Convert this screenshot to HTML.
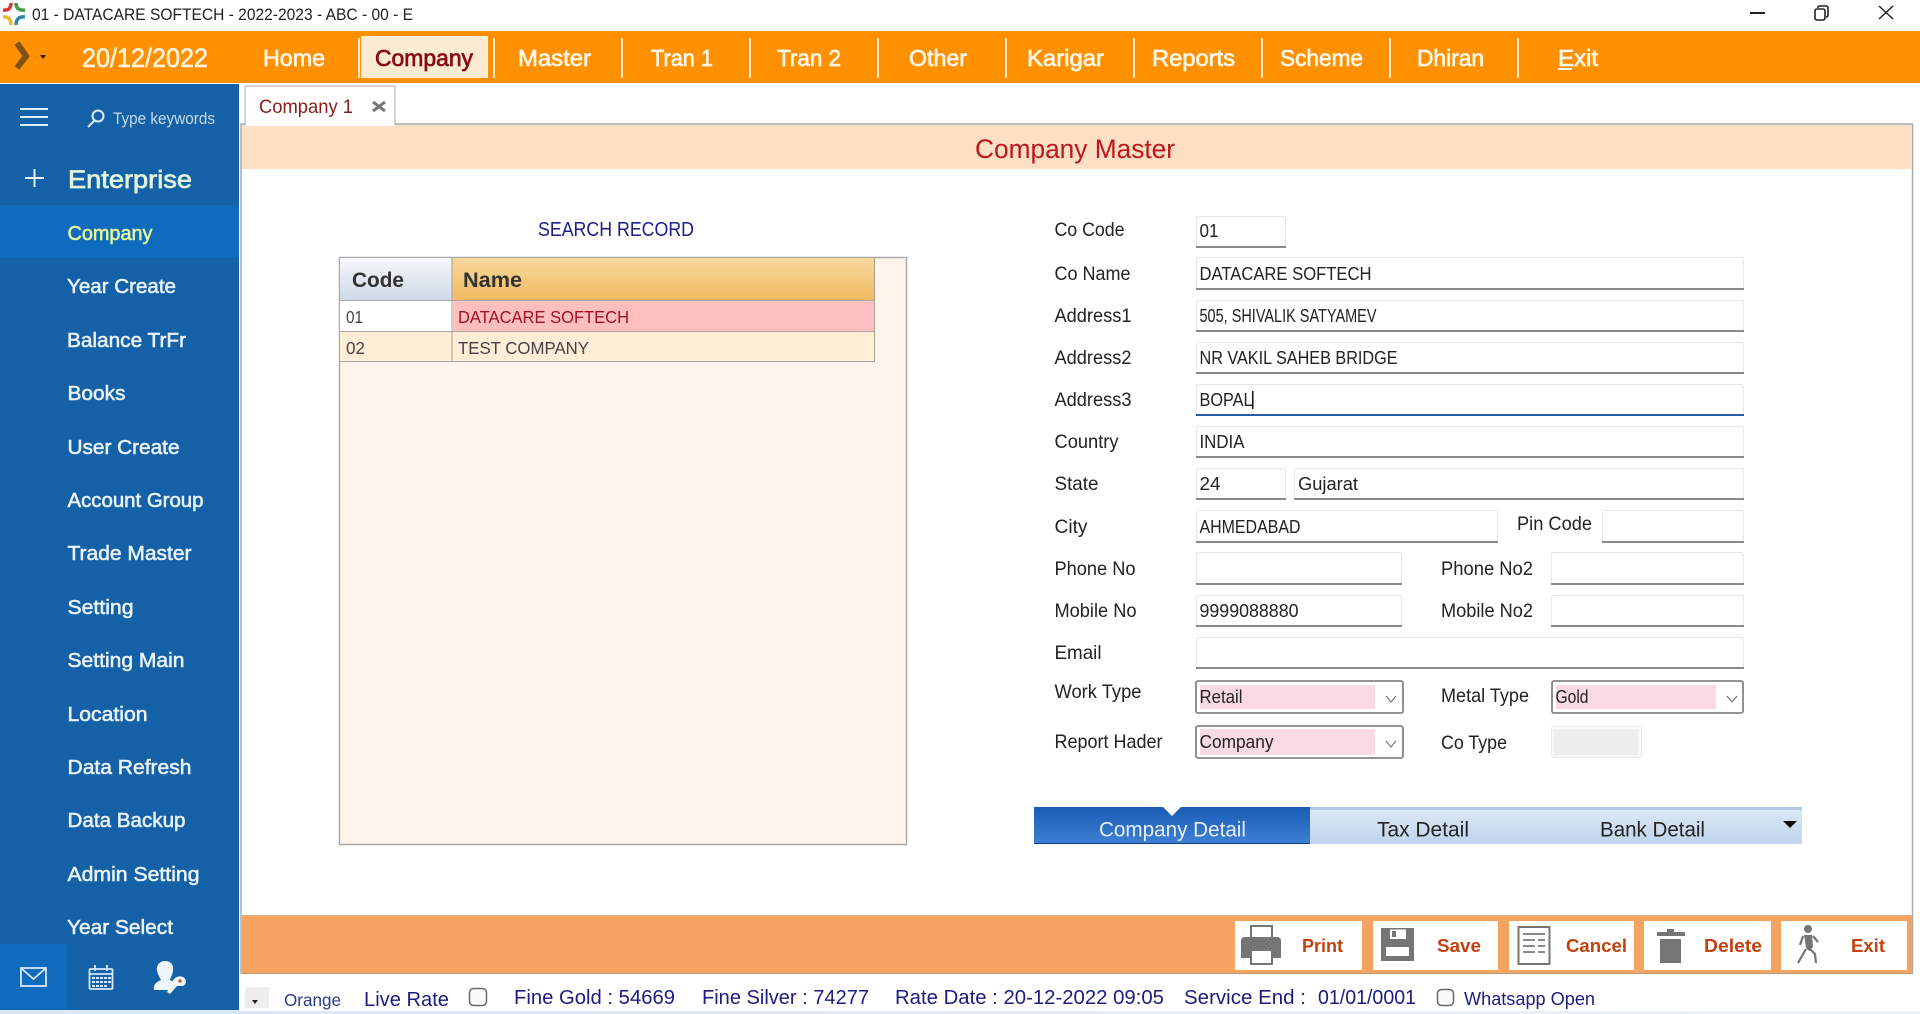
<!DOCTYPE html>
<html lang="en"><head><meta charset="utf-8"><title>Company Master</title>
<style>
html,body{margin:0;padding:0;background:#fff;overflow:hidden}
svg{display:block;font-family:"Liberation Sans",sans-serif}
.n{font-size:23.5px;fill:#fff6ea;stroke:#fff6ea;stroke-width:.7px}
.s{font-size:20px;fill:#eaf3fb;stroke:#eaf3fb;stroke-width:.55px}
.l{font-size:19.5px;fill:#222}
.v{font-size:18px;fill:#222}
.b{font-size:18px;font-weight:bold;fill:#c2410f}
.st{font-size:20px;fill:#1c1c80}
.i{fill:#fff;stroke:#e6e6e6}
.u{fill:#8a8a8a}
</style></head><body>
<svg width="1920" height="1014" viewBox="0 0 1920 1014" xmlns="http://www.w3.org/2000/svg">
<defs>
<linearGradient id="gc" x1="0" y1="0" x2="0" y2="1"><stop offset="0" stop-color="#f6f8fb"/><stop offset="1" stop-color="#cfd9e8"/></linearGradient>
<linearGradient id="gn" x1="0" y1="0" x2="0" y2="1"><stop offset="0" stop-color="#f7d99c"/><stop offset="1" stop-color="#f0ba62"/></linearGradient>
<linearGradient id="ga" x1="0" y1="0" x2="0" y2="1"><stop offset="0" stop-color="#1b5cb6"/><stop offset="1" stop-color="#3e80d3"/></linearGradient>
<linearGradient id="gt" x1="0" y1="0" x2="0" y2="1"><stop offset="0" stop-color="#dde9f6"/><stop offset="1" stop-color="#c0d4ec"/></linearGradient>
<linearGradient id="gb" x1="0" y1="0" x2="1" y2="0"><stop offset="0" stop-color="#dbe6f5"/><stop offset="1" stop-color="#eef3fa"/></linearGradient>
</defs>
<rect width="1920" height="1014" fill="#fff"/>

<!-- title bar -->
<g fill="none" stroke-width="3.500" stroke-linecap="butt">
<path d="M3 10 Q11 11 11 3" stroke="#d8343c"/>
<path d="M16 3 Q16 11 25 10" stroke="#3f9d4a"/>
<path d="M3 17 Q11 16 11 25" stroke="#f0b92c"/>
<path d="M16 25 Q16 16 25 17" stroke="#2b87a8"/>
</g>
<text x="32" y="20" font-size="17" fill="#222" textLength="381" lengthAdjust="spacingAndGlyphs">01 - DATACARE SOFTECH - 2022-2023 - ABC - 00 - E</text>
<rect x="1750" y="12" width="15" height="2" fill="#222"/>
<g fill="none" stroke="#222" stroke-width="1.6"><rect x="1815" y="9" width="10" height="11" rx="2"/><path d="M1818 8 V7 Q1818 6 1820 6 H1826 Q1828 6 1828 8 V15 Q1828 17 1826 17"/></g>
<path d="M1879 6 L1893 19 M1893 6 L1879 19" stroke="#222" stroke-width="1.5" fill="none"/>

<!-- orange nav -->
<rect x="0" y="31" width="1920" height="52" fill="#ff9100"/>
<path d="M17 43 L26 56 L17 68" fill="none" stroke="#7f5213" stroke-width="6"/>
<path d="M40 55 H46 L43 59Z" fill="#2a1a00"/>
<text x="82" y="67" font-size="26.500" fill="#fff3e0" stroke="#fff3e0" stroke-width=".6" textLength="126" lengthAdjust="spacingAndGlyphs">20/12/2022</text>
<rect x="361" y="36" width="127" height="42" fill="#fdeaD2"/>
<g fill="#ffe9cf">
<rect x="358" y="38" width="2" height="40"/><rect x="493" y="38" width="2" height="40"/><rect x="621" y="38" width="2" height="40"/><rect x="749" y="38" width="2" height="40"/><rect x="877" y="38" width="2" height="40"/><rect x="1005" y="38" width="2" height="40"/><rect x="1133" y="38" width="2" height="40"/><rect x="1261" y="38" width="2" height="40"/><rect x="1389" y="38" width="2" height="40"/><rect x="1517" y="38" width="2" height="40"/>
</g>
<text class="n" x="263" y="66" textLength="62" lengthAdjust="spacingAndGlyphs">Home</text>
<text class="n" x="375" y="66" style="fill:#860c18;stroke:#860c18" textLength="98" lengthAdjust="spacingAndGlyphs">Company</text>
<text class="n" x="518" y="66" textLength="73" lengthAdjust="spacingAndGlyphs">Master</text>
<text class="n" x="651" y="66" textLength="62" lengthAdjust="spacingAndGlyphs">Tran 1</text>
<text class="n" x="777" y="66" textLength="64" lengthAdjust="spacingAndGlyphs">Tran 2</text>
<text class="n" x="909" y="66" textLength="58" lengthAdjust="spacingAndGlyphs">Other</text>
<text class="n" x="1027" y="66" textLength="77" lengthAdjust="spacingAndGlyphs">Karigar</text>
<text class="n" x="1152" y="66" textLength="83" lengthAdjust="spacingAndGlyphs">Reports</text>
<text class="n" x="1280" y="66" textLength="83" lengthAdjust="spacingAndGlyphs">Scheme</text>
<text class="n" x="1417" y="66" textLength="67" lengthAdjust="spacingAndGlyphs">Dhiran</text>
<text class="n" x="1558" y="66" textLength="40" lengthAdjust="spacingAndGlyphs">Exit</text>
<rect x="1558" y="68" width="14" height="2" fill="#fff6ea"/>

<!-- sidebar -->
<rect x="0" y="84" width="239" height="926" fill="#1561a8"/>
<rect x="0" y="205" width="239" height="53" fill="#0f6bbe"/>
<rect x="0" y="944" width="67" height="66" fill="#0f6bbe"/>
<g fill="#e3eef8"><rect x="20" y="108" width="28" height="2"/><rect x="20" y="116" width="28" height="2"/><rect x="20" y="124" width="28" height="2"/></g>
<g fill="none" stroke="#dbe8f5" stroke-width="2"><circle cx="98" cy="116" r="5.5"/><path d="M94 121 L88 127"/></g>
<text x="113" y="124" font-size="16.500" fill="#c6d8ea" textLength="102" lengthAdjust="spacingAndGlyphs">Type keywords</text>
<path d="M25 178 H44 M34.500 169 V187" stroke="#e6f0f8" stroke-width="2" fill="none"/>
<text x="68" y="188" font-size="25" fill="#e2f6dc" stroke="#e2f6dc" stroke-width=".7" textLength="124" lengthAdjust="spacingAndGlyphs">Enterprise</text>
<text class="s" x="67.500" y="240" style="fill:#e6f59c;stroke:#e6f59c" textLength="85" lengthAdjust="spacingAndGlyphs">Company</text>
<text class="s" x="67" y="293" textLength="109" lengthAdjust="spacingAndGlyphs">Year Create</text>
<text class="s" x="67" y="347" textLength="119" lengthAdjust="spacingAndGlyphs">Balance TrFr</text>
<text class="s" x="67.500" y="400" textLength="58" lengthAdjust="spacingAndGlyphs">Books</text>
<text class="s" x="67.500" y="454" textLength="112" lengthAdjust="spacingAndGlyphs">User Create</text>
<text class="s" x="67.500" y="507" textLength="136" lengthAdjust="spacingAndGlyphs">Account Group</text>
<text class="s" x="67.500" y="560" textLength="124" lengthAdjust="spacingAndGlyphs">Trade Master</text>
<text class="s" x="67.500" y="614" textLength="66" lengthAdjust="spacingAndGlyphs">Setting</text>
<text class="s" x="67.500" y="667" textLength="117" lengthAdjust="spacingAndGlyphs">Setting Main</text>
<text class="s" x="67.500" y="721" textLength="80" lengthAdjust="spacingAndGlyphs">Location</text>
<text class="s" x="67.500" y="774" textLength="124" lengthAdjust="spacingAndGlyphs">Data Refresh</text>
<text class="s" x="67.500" y="827" textLength="118" lengthAdjust="spacingAndGlyphs">Data Backup</text>
<text class="s" x="67.500" y="881" textLength="132" lengthAdjust="spacingAndGlyphs">Admin Setting</text>
<text class="s" x="67" y="934" textLength="106" lengthAdjust="spacingAndGlyphs">Year Select</text>
<g fill="none" stroke="#d6e8f8" stroke-width="1.8">
<rect x="21" y="968" width="25" height="18"/><path d="M21 968 L33.500 979 L46 968"/>
<rect x="89.500" y="969" width="23" height="20" rx="1"/><path d="M89.500 974 H112.500 M95 965 V971 M107 965 V971"/>
</g>
<g fill="#d6e8f8"><rect x="92" y="977" width="3" height="2"/><rect x="96" y="977" width="3" height="2"/><rect x="100" y="977" width="3" height="2"/><rect x="104" y="977" width="3" height="2"/><rect x="108" y="977" width="3" height="2"/><rect x="92" y="981" width="3" height="2"/><rect x="96" y="981" width="3" height="2"/><rect x="100" y="981" width="3" height="2"/><rect x="104" y="981" width="3" height="2"/><rect x="108" y="981" width="3" height="2"/><rect x="92" y="985" width="3" height="2"/><rect x="96" y="985" width="3" height="2"/><rect x="100" y="985" width="3" height="2"/><rect x="104" y="985" width="3" height="2"/></g>
<path d="M165 961 C171 961 174 965 173 971 C172 976 170 979 170 980 C172 981 175 982 177 983 L170 990 L154 990 C153 985 156 982 161 980 C160 978 158 975 157 971 C156 965 160 961 165 961Z" fill="#eef6fc"/>
<path d="M183 977 C187 979 187 984 183 986 L177 986 L170 994 L167 992 L172 983 C173 978 178 975 183 977Z" fill="#eef6fc"/>
<circle cx="180" cy="981" r="1.800" fill="#c8604a"/>

<!-- content panel -->
<rect x="245" y="86" width="150" height="39" fill="#fff" stroke="#aaa"/>
<text x="259" y="113" font-size="19.500" fill="#8a1c1c" textLength="94" lengthAdjust="spacingAndGlyphs">Company 1</text>
<path d="M373 102 L385 111 M385 102 L373 111" stroke="#777" stroke-width="3" fill="none"/>
<path d="M241 974 V124 H245 M395 124 H1912.500 V974" fill="none" stroke="#a9a9a9" stroke-width="1.500"/>
<rect x="242" y="125" width="1670" height="44" fill="#fde0c3"/>
<rect x="246" y="122" width="148.500" height="4" fill="#fff"/>
<text x="975" y="158" font-size="26.500" fill="#c0161b" textLength="200" lengthAdjust="spacingAndGlyphs">Company Master</text>

<text x="538" y="236" font-size="20" fill="#1c1c8a" textLength="156" lengthAdjust="spacingAndGlyphs">SEARCH RECORD</text>

<!-- grid -->
<rect x="339.500" y="257.500" width="567" height="587" fill="#fff4ec" stroke="#aaa" stroke-width="1.500"/>
<rect x="340" y="258" width="112" height="42" fill="url(#gc)"/>
<rect x="452" y="258" width="422" height="42" fill="url(#gn)"/>
<rect x="340" y="301" width="112" height="30" fill="#fff"/>
<rect x="453" y="301" width="421" height="30" fill="#ffbfbf"/>
<rect x="340" y="332" width="534" height="29" fill="#ffedd6"/>
<path d="M340 300.500 H874 M340 331.500 H874 M340 361.500 H874" stroke="#a8a8a8" fill="none"/>
<path d="M874.500 258 V362" stroke="#a8a090" fill="none"/>
<path d="M452 258 V362" stroke="#a8a090" fill="none"/>
<text x="352" y="287" font-size="21" font-weight="bold" fill="#333" textLength="52" lengthAdjust="spacingAndGlyphs">Code</text>
<text x="463" y="287" font-size="21" font-weight="bold" fill="#333" textLength="59" lengthAdjust="spacingAndGlyphs">Name</text>
<text x="346" y="323" font-size="17.500" fill="#444" textLength="17" lengthAdjust="spacingAndGlyphs">01</text>
<text x="458" y="323" font-size="17.500" fill="#a31022" textLength="171" lengthAdjust="spacingAndGlyphs">DATACARE SOFTECH</text>
<text x="346" y="354" font-size="17.500" fill="#444" textLength="19" lengthAdjust="spacingAndGlyphs">02</text>
<text x="458" y="354" font-size="17.500" fill="#444" textLength="131" lengthAdjust="spacingAndGlyphs">TEST COMPANY</text>

<!-- labels -->
<text class="l" x="1054.500" y="236" textLength="70" lengthAdjust="spacingAndGlyphs">Co Code</text>
<text class="l" x="1054.500" y="280" textLength="76" lengthAdjust="spacingAndGlyphs">Co Name</text>
<text class="l" x="1054.500" y="322" textLength="77" lengthAdjust="spacingAndGlyphs">Address1</text>
<text class="l" x="1054.500" y="364" textLength="77" lengthAdjust="spacingAndGlyphs">Address2</text>
<text class="l" x="1054.500" y="406" textLength="77" lengthAdjust="spacingAndGlyphs">Address3</text>
<text class="l" x="1054.500" y="448" textLength="64" lengthAdjust="spacingAndGlyphs">Country</text>
<text class="l" x="1054.500" y="490" textLength="44" lengthAdjust="spacingAndGlyphs">State</text>
<text class="l" x="1054.500" y="533" textLength="33" lengthAdjust="spacingAndGlyphs">City</text>
<text class="l" x="1054.500" y="575" textLength="81" lengthAdjust="spacingAndGlyphs">Phone No</text>
<text class="l" x="1054.500" y="617" textLength="82" lengthAdjust="spacingAndGlyphs">Mobile No</text>
<text class="l" x="1054.500" y="659" textLength="47" lengthAdjust="spacingAndGlyphs">Email</text>
<text class="l" x="1054.500" y="698" textLength="87" lengthAdjust="spacingAndGlyphs">Work Type</text>
<text class="l" x="1054.500" y="748" textLength="108" lengthAdjust="spacingAndGlyphs">Report Hader</text>
<text class="l" x="1517" y="530" textLength="75" lengthAdjust="spacingAndGlyphs">Pin Code</text>
<text class="l" x="1441" y="575" textLength="92" lengthAdjust="spacingAndGlyphs">Phone No2</text>
<text class="l" x="1441" y="617" textLength="92" lengthAdjust="spacingAndGlyphs">Mobile No2</text>
<text class="l" x="1441" y="702" textLength="88" lengthAdjust="spacingAndGlyphs">Metal Type</text>
<text class="l" x="1441" y="749" textLength="66" lengthAdjust="spacingAndGlyphs">Co Type</text>

<!-- inputs -->
<g class="i">
<rect x="1196.500" y="216.500" width="89" height="30" rx="2"/>
<rect x="1196.500" y="257.500" width="547" height="31" rx="2"/>
<rect x="1196.500" y="300.500" width="547" height="31" rx="2"/>
<rect x="1196.500" y="342.500" width="547" height="31" rx="2"/>
<rect x="1196.500" y="384.500" width="547" height="31" rx="2"/>
<rect x="1196.500" y="426.500" width="547" height="31" rx="2"/>
<rect x="1196.500" y="468.500" width="89" height="31" rx="2"/>
<rect x="1294.500" y="468.500" width="449" height="31" rx="2"/>
<rect x="1196.500" y="510.500" width="301" height="31" rx="2"/>
<rect x="1602.500" y="510.500" width="141" height="31" rx="2"/>
<rect x="1196.500" y="552.500" width="205" height="31" rx="2"/>
<rect x="1551.500" y="552.500" width="192" height="31" rx="2"/>
<rect x="1196.500" y="595.500" width="205" height="31" rx="2"/>
<rect x="1551.500" y="595.500" width="192" height="31" rx="2"/>
<rect x="1196.500" y="637.500" width="547" height="31" rx="2"/>
</g>
<g class="u">
<rect x="1196" y="246" width="90" height="2"/>
<rect x="1196" y="288" width="548" height="2"/>
<rect x="1196" y="330" width="548" height="2"/>
<rect x="1196" y="372" width="548" height="2"/>
<rect x="1196" y="456" width="548" height="2"/>
<rect x="1196" y="498" width="90" height="2"/>
<rect x="1294" y="498" width="450" height="2"/>
<rect x="1196" y="541" width="302" height="2"/>
<rect x="1602" y="541" width="142" height="2"/>
<rect x="1196" y="583" width="206" height="2"/>
<rect x="1551" y="583" width="193" height="2"/>
<rect x="1196" y="625" width="206" height="2"/>
<rect x="1551" y="625" width="193" height="2"/>
<rect x="1196" y="667" width="548" height="2"/>
</g>
<rect x="1196" y="414" width="548" height="2" fill="#1f5fa8"/>
<text class="v" x="1199.500" y="237" textLength="19" lengthAdjust="spacingAndGlyphs">01</text>
<text class="v" x="1199.500" y="280" textLength="172" lengthAdjust="spacingAndGlyphs">DATACARE SOFTECH</text>
<text class="v" x="1199.500" y="322" textLength="177" lengthAdjust="spacingAndGlyphs">505, SHIVALIK SATYAMEV</text>
<text class="v" x="1199.500" y="364" textLength="198" lengthAdjust="spacingAndGlyphs">NR VAKIL SAHEB BRIDGE</text>
<text class="v" x="1199.500" y="406" textLength="53" lengthAdjust="spacingAndGlyphs">BOPAL</text>
<rect x="1252" y="391" width="1.500" height="18" fill="#111"/>
<text class="v" x="1199.500" y="448" textLength="45" lengthAdjust="spacingAndGlyphs">INDIA</text>
<text class="v" x="1199.500" y="490" textLength="21" lengthAdjust="spacingAndGlyphs">24</text>
<text class="v" x="1298" y="490" textLength="60" lengthAdjust="spacingAndGlyphs">Gujarat</text>
<text class="v" x="1199.500" y="533" textLength="101" lengthAdjust="spacingAndGlyphs">AHMEDABAD</text>
<text class="v" x="1199.500" y="617" textLength="99" lengthAdjust="spacingAndGlyphs">9999088880</text>

<!-- selects -->
<g fill="#fff" stroke="#858585" stroke-width="1.800">
<rect x="1196" y="681" width="207" height="32" rx="2"/>
<rect x="1552" y="681" width="191" height="32" rx="2"/>
<rect x="1196" y="726" width="207" height="32" rx="2"/>
</g>
<g fill="#f9d9e4">
<rect x="1200" y="685" width="175" height="24"/>
<rect x="1556" y="685" width="160" height="24"/>
<rect x="1200" y="729" width="175" height="26"/>
</g>
<g fill="none" stroke="#666" stroke-width="1">
<path d="M1386 696 L1391 702 L1396 696"/>
<path d="M1727 696 L1732 702 L1737 696"/>
<path d="M1386 741 L1391 747 L1396 741"/>
</g>
<text class="v" x="1199.500" y="703" textLength="43" lengthAdjust="spacingAndGlyphs">Retail</text>
<text class="v" x="1555.500" y="703" textLength="33" lengthAdjust="spacingAndGlyphs">Gold</text>
<text class="v" x="1199.500" y="748" textLength="74" lengthAdjust="spacingAndGlyphs">Company</text>
<rect x="1551.500" y="726.500" width="90" height="31" rx="2" fill="#f8f8f8" stroke="#ececec"/>
<rect x="1554" y="729" width="84" height="26" fill="#eeeeee"/>

<!-- tab strip -->
<rect x="1034" y="807" width="768" height="37" fill="url(#gt)"/>
<rect x="1310" y="807" width="492" height="3" fill="#b4c7e0"/>
<rect x="1034" y="807" width="276" height="37" fill="url(#ga)"/>
<path d="M1034 843.500 H1310" stroke="#123f86" fill="none"/>
<path d="M1163 807 H1181 L1172 816Z" fill="#fff"/>
<text x="1099" y="836.500" font-size="21.500" fill="#e6effc" textLength="147" lengthAdjust="spacingAndGlyphs">Company Detail</text>
<text x="1377" y="836.500" font-size="21.500" fill="#222" textLength="92" lengthAdjust="spacingAndGlyphs">Tax Detail</text>
<text x="1600" y="836.500" font-size="21.500" fill="#222" textLength="105" lengthAdjust="spacingAndGlyphs">Bank Detail</text>
<path d="M1783 821 H1797 L1790 828Z" fill="#111"/>

<!-- footer -->
<rect x="242" y="915" width="1670" height="59" fill="#f4a460"/>
<path d="M242 915.500 H1912" stroke="#d9b48f" fill="none"/>
<path d="M242 973.500 H1912" stroke="#c09a78" fill="none"/>
<g fill="#fff">
<rect x="1235" y="921" width="127" height="49"/>
<rect x="1373" y="921" width="125" height="49"/>
<rect x="1509" y="921" width="125" height="49"/>
<rect x="1644" y="921" width="127" height="49"/>
<rect x="1781" y="921" width="126" height="49"/>
</g>
<text class="b" x="1302" y="952" textLength="41" lengthAdjust="spacingAndGlyphs">Print</text>
<text class="b" x="1437" y="952" textLength="44" lengthAdjust="spacingAndGlyphs">Save</text>
<text class="b" x="1566" y="952" textLength="61" lengthAdjust="spacingAndGlyphs">Cancel</text>
<text class="b" x="1704" y="952" textLength="58" lengthAdjust="spacingAndGlyphs">Delete</text>
<text class="b" x="1851" y="952" textLength="34" lengthAdjust="spacingAndGlyphs">Exit</text>
<!-- print -->
<path d="M1251 937 V926 H1272 V937" fill="none" stroke="#757575" stroke-width="2"/>
<path d="M1245 937 H1277 Q1281 937 1281 941 V958 H1273 V949 H1250 V958 H1241 V941 Q1241 937 1245 937Z" fill="#757575"/>
<rect x="1251" y="950" width="21" height="14" fill="#fff" stroke="#757575" stroke-width="2"/>
<!-- save -->
<path d="M1381 928 H1414 V961 H1381Z M1390 929.500 V939 H1406 V929.500Z M1386 947 V956 H1409 V947Z" fill="#757575" fill-rule="evenodd"/>
<rect x="1392" y="931" width="4" height="6" fill="#757575"/>
<!-- cancel -->
<rect x="1518.500" y="927" width="31" height="37" fill="#fff" stroke="#757575" stroke-width="2"/>
<g fill="#8a8a8a"><rect x="1523" y="933" width="22" height="2"/><rect x="1523" y="939" width="12" height="2"/><rect x="1538" y="939" width="7" height="2"/><rect x="1523" y="945" width="12" height="2"/><rect x="1538" y="945" width="7" height="2"/><rect x="1523" y="951" width="12" height="2"/><rect x="1538" y="951" width="7" height="2"/></g>
<!-- delete -->
<path d="M1657 936 V932 H1667 V929 H1674 V932 H1685 V936Z" fill="#757575"/>
<rect x="1660" y="939" width="21" height="24" fill="#757575"/>
<!-- exit walker -->
<circle cx="1808" cy="929" r="4" fill="#757575"/>
<path d="M1804 935 H1812 L1813 947 L1809 951 L1806 948 Z" fill="#757575"/>
<path d="M1806 949 L1798 963 M1810 949 L1815 954 L1816 963 M1803 936 L1800 945 M1813 936 L1818 942" stroke="#757575" stroke-width="2.200" fill="none"/>

<!-- status bar -->
<rect x="240" y="1011" width="1680" height="3" fill="url(#gb)"/>
<rect x="0" y="1010" width="240" height="4" fill="#dbe6f5"/>
<rect x="245" y="987" width="24" height="21" fill="#eeeeee"/>
<path d="M252 1000 H258 L255 1004Z" fill="#222"/>
<text x="284" y="1006" font-size="17.500" fill="#2a3a8a" textLength="57" lengthAdjust="spacingAndGlyphs">Orange</text>
<text class="st" x="364" y="1006" textLength="85" lengthAdjust="spacingAndGlyphs">Live Rate</text>
<rect x="469.500" y="988.500" width="17" height="17" rx="4" fill="#fafafa" stroke="#6a6a6a" stroke-width="1.500"/>
<text class="st" x="514" y="1004" textLength="161" lengthAdjust="spacingAndGlyphs">Fine Gold : 54669</text>
<text class="st" x="702" y="1004" textLength="167" lengthAdjust="spacingAndGlyphs">Fine Silver : 74277</text>
<text class="st" x="895" y="1004" textLength="269" lengthAdjust="spacingAndGlyphs">Rate Date : 20-12-2022 09:05</text>
<text class="st" x="1184" y="1004" textLength="122" lengthAdjust="spacingAndGlyphs">Service End :</text>
<text class="st" x="1318" y="1004" textLength="98" lengthAdjust="spacingAndGlyphs">01/01/0001</text>
<rect x="1437.500" y="989.500" width="16" height="16" rx="4" fill="#fafafa" stroke="#6a6a6a" stroke-width="1.500"/>
<text x="1464" y="1005" font-size="18" fill="#1c1c80" textLength="131" lengthAdjust="spacingAndGlyphs">Whatsapp Open</text>
</svg>
</body></html>
